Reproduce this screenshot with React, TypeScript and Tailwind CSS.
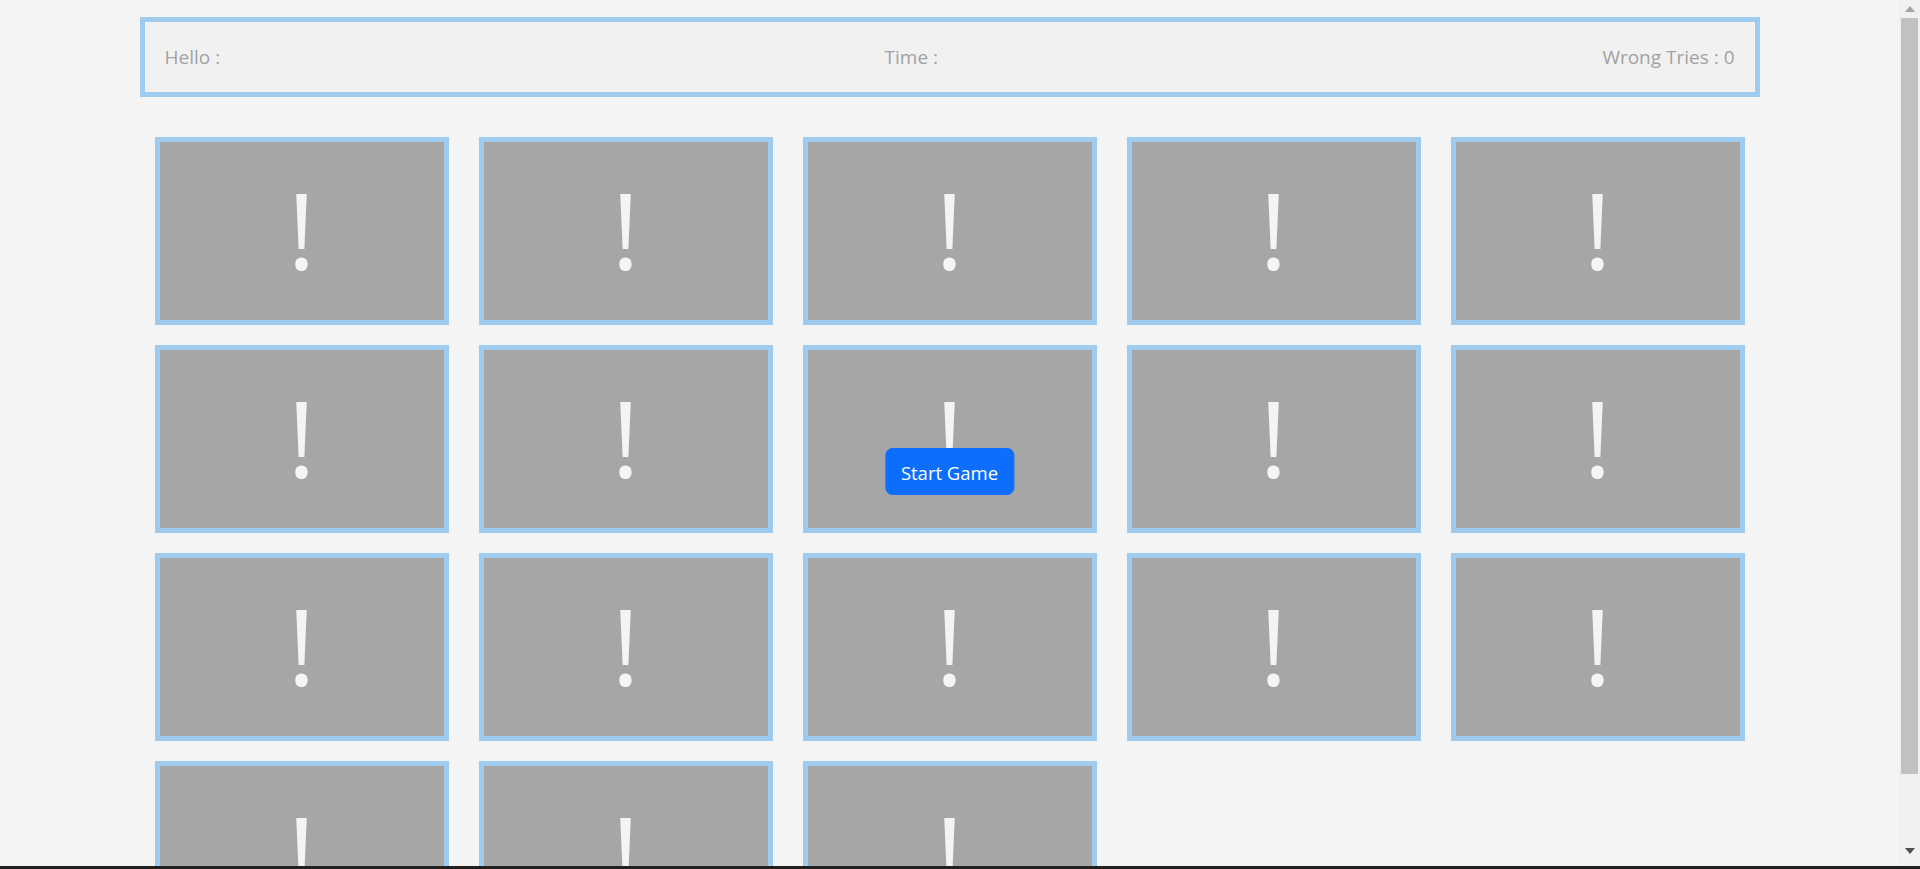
import React from 'react'

const cards = Array.from({ length: 18 }, (_, i) => i)

function Card() {
  return (
    <div className="h-[188px] border-[5px] border-[#9fcbef] bg-[#a6a6a6] flex items-center justify-center pb-[5px] select-none">
      <span className="text-[106px] leading-none font-normal text-[#f4f4f4] font-['Open_Sans',sans-serif]">!</span>
    </div>
  )
}

function Scrollbar() {
  return (
    <div className="w-[21px] h-full bg-[#f0f0f0] flex flex-col items-center shrink-0">
      <div className="h-[18px] w-full flex items-center justify-center">
        <svg width="10" height="6" viewBox="0 0 10 6"><polygon points="0,6 10,6 5,0" fill="#a3a3a3" /></svg>
      </div>
      <div className="h-[756px] w-[17px] bg-[#c1c1c1]" />
      <div className="flex-1" />
      <div className="h-[24px] w-full flex items-start justify-center pt-[3px]">
        <svg width="10" height="6" viewBox="0 0 10 6"><polygon points="0,0 10,0 5,6" fill="#505050" /></svg>
      </div>
    </div>
  )
}

export default function App() {
  return (
    <div className="h-screen flex overflow-hidden bg-[#f4f4f4] font-['Open_Sans',sans-serif]">
      <div className="flex-1 overflow-hidden">
        <div className="relative w-[1620px] mx-auto pt-[17px] pb-[10px]">
          {/* Header */}
          <div className="h-[80px] border-[5px] border-[#9fcbef] bg-[#f1f1f1] flex items-center justify-between px-[20px] text-[19px] text-[#a2a2a2]">
            <span>Hello :</span>
            <span>Time :</span>
            <span>Wrong Tries : 0</span>
          </div>

          {/* Board */}
          <div className="grid grid-cols-5 gap-x-[30px] gap-y-[20px] px-[15px] mt-[40px]">
            {cards.map(c => <Card key={c} />)}
          </div>

          <button className="absolute top-[448px] left-1/2 -translate-x-1/2 h-[47px] px-[15px] pt-[2px] rounded-[7px] bg-[#0d6efd] text-white text-[18.5px] border border-[#0d6efd]">
            Start Game
          </button>
        </div>
      </div>
      <Scrollbar />
      <div className="fixed bottom-0 left-0 right-0 h-[3px] bg-[#202020]" />
    </div>
  )
}
